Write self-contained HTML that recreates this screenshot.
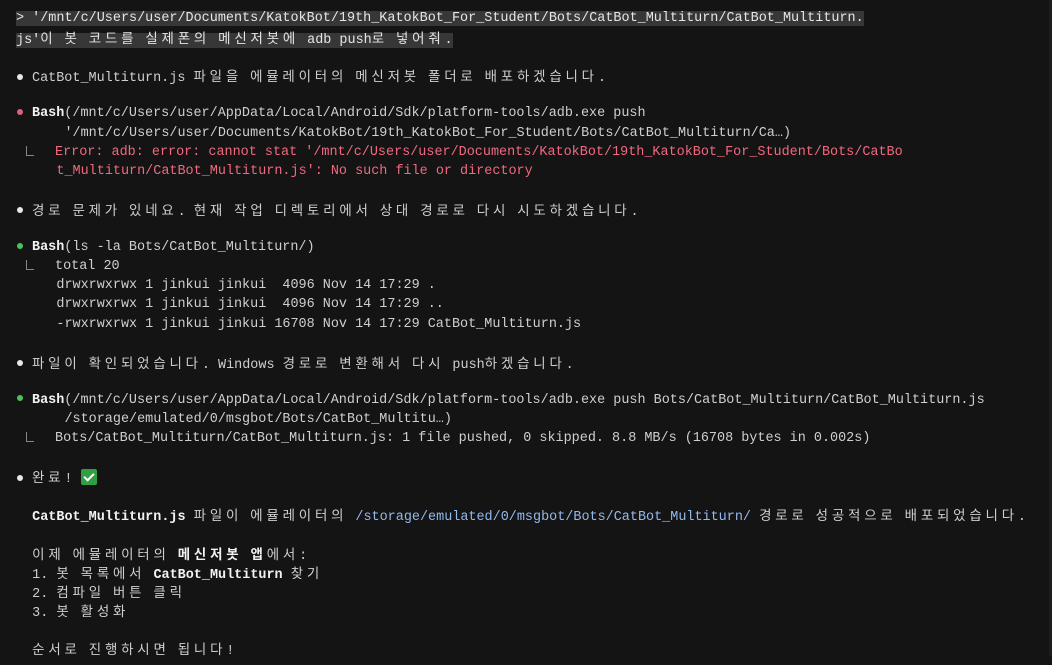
<!DOCTYPE html>
<html><head><meta charset="utf-8"><style>
html,body{margin:0;background:#141414;width:1052px;height:656px;overflow:hidden}
body{font-family:"Liberation Mono","Noto Sans CJK KR",monospace;font-size:13.46px;color:#cfcfcf;padding-top:9px;position:relative}
.l{height:19.1px;line-height:19.1px;white-space:pre;padding-left:16px;overflow:visible}
.k{font-family:"Noto Sans CJK KR",sans-serif;letter-spacing:3.8px}
.hl{background:#373737;color:#e6e6e6}
b{color:#f2f2f2;font-weight:bold}
.dot{display:inline-block;width:16px}
.dot:before{content:"";display:inline-block;width:6px;height:6px;border-radius:50%;background:#e8e8e8;vertical-align:middle;margin-left:1px;margin-top:-2px}
.red:before{background:#e0607a}
.grn:before{background:#4cc35a}
.err{color:#f2687f}
.blue{color:#93b9ee}
.elb{display:inline-block;width:8px;height:10px;border-left:1px solid #888;border-bottom:1px solid #888;margin:0 21px 0 10px;vertical-align:-1px;box-sizing:border-box}
.chk{display:inline-block;width:16px;height:16px;background:#2ea043;border-radius:2px;vertical-align:-3px;position:relative}
.chk:after{content:"";position:absolute;left:5px;top:2px;width:4px;height:8px;border:solid #fff;border-width:0 2px 2px 0;transform:rotate(45deg)}
.sb{position:absolute;right:0;top:0;width:3px;height:656px;background:#1c1c1c}
</style></head><body>
<div class="sb"></div>
<div class="l"><span class="hl">&gt; '/mnt/c/Users/user/Documents/KatokBot/19th_KatokBot_For_Student/Bots/CatBot_Multiturn/CatBot_Multiturn.</span></div>
<div class="l"><span class="hl">js'<span class="k">이</span> <span class="k">봇</span> <span class="k">코드를</span> <span class="k">실제폰의</span> <span class="k">메신저봇에</span> adb push<span class="k">로</span> <span class="k">넣어줘</span>.</span></div>
<div class="l"> </div>
<div class="l"><span class="dot"></span>CatBot_Multiturn.js <span class="k">파일을</span> <span class="k">에뮬레이터의</span> <span class="k">메신저봇</span> <span class="k">폴더로</span> <span class="k">배포하겠습니다</span>.</div>
<div class="l"> </div>
<div class="l"><span class="dot red"></span><b>Bash</b>(/mnt/c/Users/user/AppData/Local/Android/Sdk/platform-tools/adb.exe push</div>
<div class="l">      '/mnt/c/Users/user/Documents/KatokBot/19th_KatokBot_For_Student/Bots/CatBot_Multiturn/Ca…)</div>
<div class="l"><span class="elb"></span><span class="err">Error: adb: error: cannot stat '/mnt/c/Users/user/Documents/KatokBot/19th_KatokBot_For_Student/Bots/CatBo</span></div>
<div class="l">     <span class="err">t_Multiturn/CatBot_Multiturn.js': No such file or directory</span></div>
<div class="l"> </div>
<div class="l"><span class="dot"></span><span class="k">경로</span> <span class="k">문제가</span> <span class="k">있네요</span>. <span class="k">현재</span> <span class="k">작업</span> <span class="k">디렉토리에서</span> <span class="k">상대</span> <span class="k">경로로</span> <span class="k">다시</span> <span class="k">시도하겠습니다</span>.</div>
<div class="l"> </div>
<div class="l"><span class="dot grn"></span><b>Bash</b>(ls -la Bots/CatBot_Multiturn/)</div>
<div class="l"><span class="elb"></span>total 20</div>
<div class="l">     drwxrwxrwx 1 jinkui jinkui  4096 Nov 14 17:29 .</div>
<div class="l">     drwxrwxrwx 1 jinkui jinkui  4096 Nov 14 17:29 ..</div>
<div class="l">     -rwxrwxrwx 1 jinkui jinkui 16708 Nov 14 17:29 CatBot_Multiturn.js</div>
<div class="l"> </div>
<div class="l"><span class="dot"></span><span class="k">파일이</span> <span class="k">확인되었습니다</span>. Windows <span class="k">경로로</span> <span class="k">변환해서</span> <span class="k">다시</span> push<span class="k">하겠습니다</span>.</div>
<div class="l"> </div>
<div class="l"><span class="dot grn"></span><b>Bash</b>(/mnt/c/Users/user/AppData/Local/Android/Sdk/platform-tools/adb.exe push Bots/CatBot_Multiturn/CatBot_Multiturn.js</div>
<div class="l">      /storage/emulated/0/msgbot/Bots/CatBot_Multitu…)</div>
<div class="l"><span class="elb"></span>Bots/CatBot_Multiturn/CatBot_Multiturn.js: 1 file pushed, 0 skipped. 8.8 MB/s (16708 bytes in 0.002s)</div>
<div class="l"> </div>
<div class="l"><span class="dot"></span><span class="k">완료</span>! <span class="chk"></span></div>
<div class="l"> </div>
<div class="l">  <b>CatBot_Multiturn.js</b> <span class="k">파일이</span> <span class="k">에뮬레이터의</span> <span class="blue">/storage/emulated/0/msgbot/Bots/CatBot_Multiturn/</span> <span class="k">경로로</span> <span class="k">성공적으로</span> <span class="k">배포되었습니다</span>.</div>
<div class="l"> </div>
<div class="l">  <span class="k">이제</span> <span class="k">에뮬레이터의</span> <b class="k">메신저봇</b> <b class="k">앱</b><span class="k">에서</span>:</div>
<div class="l">  1. <span class="k">봇</span> <span class="k">목록에서</span> <b>CatBot_Multiturn</b> <span class="k">찾기</span></div>
<div class="l">  2. <span class="k">컴파일</span> <span class="k">버튼</span> <span class="k">클릭</span></div>
<div class="l">  3. <span class="k">봇</span> <span class="k">활성화</span></div>
<div class="l"> </div>
<div class="l">  <span class="k">순서로</span> <span class="k">진행하시면</span> <span class="k">됩니다</span>!</div>
</body></html>
